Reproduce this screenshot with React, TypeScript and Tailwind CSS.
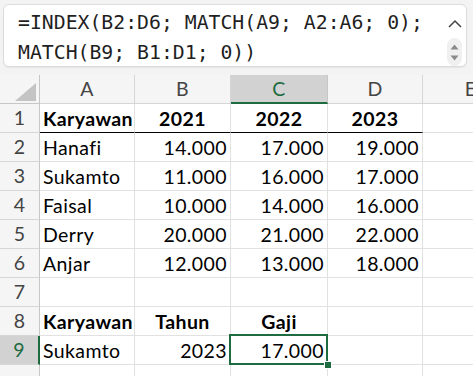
import React from 'react';

const COLS = [
  { key: 'A', w: 'w-[95px]' },
  { key: 'B', w: 'w-[96px]' },
  { key: 'C', w: 'w-[97px]' },
  { key: 'D', w: 'w-[95px]' },
  { key: 'E', w: 'w-[96px]' },
];

type Cell = { v: string; bold?: boolean; align?: 'left' | 'right' | 'center' };

const ROWS: Cell[][] = [
  [{ v: 'Karyawan', bold: true }, { v: '2021', bold: true, align: 'center' }, { v: '2022', bold: true, align: 'center' }, { v: '2023', bold: true, align: 'center' }],
  [{ v: 'Hanafi' }, { v: '14.000', align: 'right' }, { v: '17.000', align: 'right' }, { v: '19.000', align: 'right' }],
  [{ v: 'Sukamto' }, { v: '11.000', align: 'right' }, { v: '16.000', align: 'right' }, { v: '17.000', align: 'right' }],
  [{ v: 'Faisal' }, { v: '10.000', align: 'right' }, { v: '14.000', align: 'right' }, { v: '16.000', align: 'right' }],
  [{ v: 'Derry' }, { v: '20.000', align: 'right' }, { v: '21.000', align: 'right' }, { v: '22.000', align: 'right' }],
  [{ v: 'Anjar' }, { v: '12.000', align: 'right' }, { v: '13.000', align: 'right' }, { v: '18.000', align: 'right' }],
  [],
  [{ v: 'Karyawan', bold: true }, { v: 'Tahun', bold: true, align: 'center' }, { v: 'Gaji', bold: true, align: 'center' }],
  [{ v: 'Sukamto' }, { v: '2023', align: 'right' }, { v: '17.000', align: 'right' }],
  [],
];

const alignCls = (a?: string) =>
  a === 'right' ? 'text-right' : a === 'center' ? 'text-center' : 'text-left';

export default function App() {
  return (
    <div className="w-[473px] h-[376px] overflow-hidden bg-[#f3f3f3] font-['Lato',sans-serif] [font-variant-ligatures:none]">
      {/* formula bar */}
      <div className="pt-[4px] pl-[3px] pr-[6px] h-[75px]">
        <div className="relative h-[63px] rounded-[6px] bg-white border border-[#dcdcdc] shadow-[0_1px_1px_rgba(0,0,0,0.06)]">
          <div className="pl-[14px] pt-[3px] font-['DejaVu_Sans_Mono',monospace] text-[19.8px] leading-[30px] text-[#1f1f1f] whitespace-pre">
            <div>=INDEX(B2:D6; MATCH(A9; A2:A6; 0);</div>
            <div>MATCH(B9; B1:D1; 0))</div>
          </div>
          <svg className="absolute right-[3px] top-[13px]" width="16" height="12" viewBox="0 0 16 12">
            <path d="M2 9 L8 3 L14 9" fill="none" stroke="#444" strokeWidth="1.5" />
          </svg>
          <div className="absolute right-[4px] top-[33px] w-[15px] h-[28px] rounded-full bg-[#f0f0f0] flex flex-col items-center justify-center gap-[5px]">
            <svg width="9" height="6" viewBox="0 0 9 6"><path d="M0.5 5.5 L4.5 0.5 L8.5 5.5 Z" fill="#8a8a8a" /></svg>
            <svg width="9" height="6" viewBox="0 0 9 6"><path d="M0.5 0.5 L4.5 5.5 L8.5 0.5 Z" fill="#8a8a8a" /></svg>
          </div>
        </div>
      </div>

      {/* grid */}
      <div className="bg-white text-[19.5px] tracking-[0.4px] text-black">
        {/* column header */}
        <div className="flex h-[29px] bg-[#f5f5f5] text-[#444]">
          <div className="relative w-[40px] shrink-0 border-r border-b border-[#c6c6c6]">
            <svg className="absolute left-[15px] top-[8px]" width="21" height="18" viewBox="0 0 21 18">
              <path d="M21 0 L21 18 L0 18 Z" fill="#c4c4c4" />
            </svg>
          </div>
          {COLS.map((c) => (
            <div
              key={c.key}
              className={`${c.w} shrink-0 text-center leading-[28px] border-r ${
                c.key === 'C'
                  ? 'bg-[#d2d2d2] text-[#1e6b41] border-b-2 border-b-[#1e6b41] border-r-[#c6c6c6]'
                  : 'border-b border-[#d6d6d6]'
              }`}
            >
              {c.key}
            </div>
          ))}
        </div>

        {ROWS.map((row, ri) => {
          const n = ri + 1;
          const sel = n === 9;
          return (
            <div key={ri} className="flex h-[29px]">
              <div
                className={`w-[40px] shrink-0 text-center leading-[28px] border-b border-[#d6d6d6] ${
                  sel
                    ? 'bg-[#d2d2d2] text-[#1e6b41] border-r-2 border-r-[#1e6b41]'
                    : 'bg-[#f5f5f5] text-[#444] border-r border-r-[#c6c6c6]'
                }`}
              >
                {n < 10 ? n : ''}
              </div>
              {COLS.map((c, ci) => {
                const cell = row[ci];
                const headLine = n === 1 && ci < 4;
                const isSel = n === 9 && c.key === 'C';
                return (
                  <div
                    key={c.key}
                    className={`relative ${c.w} shrink-0 px-[3px] leading-[29px] whitespace-nowrap border-r border-[#e1e1e1] border-b ${
                      headLine ? 'border-b-black' : 'border-b-[#e1e1e1]'
                    } ${cell?.bold ? 'font-bold' : ''} ${alignCls(cell?.align)} ${isSel ? 'z-10' : ''}`}
                  >
                    {cell?.v}
                    {isSel && (
                      <>
                        <div className="absolute -left-[2px] -top-[2px] -right-[1px] -bottom-[1px] border-2 border-[#1e6b41]" />
                        <div className="absolute -right-[5px] -bottom-[5px] w-[8px] h-[8px] bg-[#1e6b41] border border-white" />
                      </>
                    )}
                  </div>
                );
              })}
            </div>
          );
        })}
      </div>
    </div>
  );
}
